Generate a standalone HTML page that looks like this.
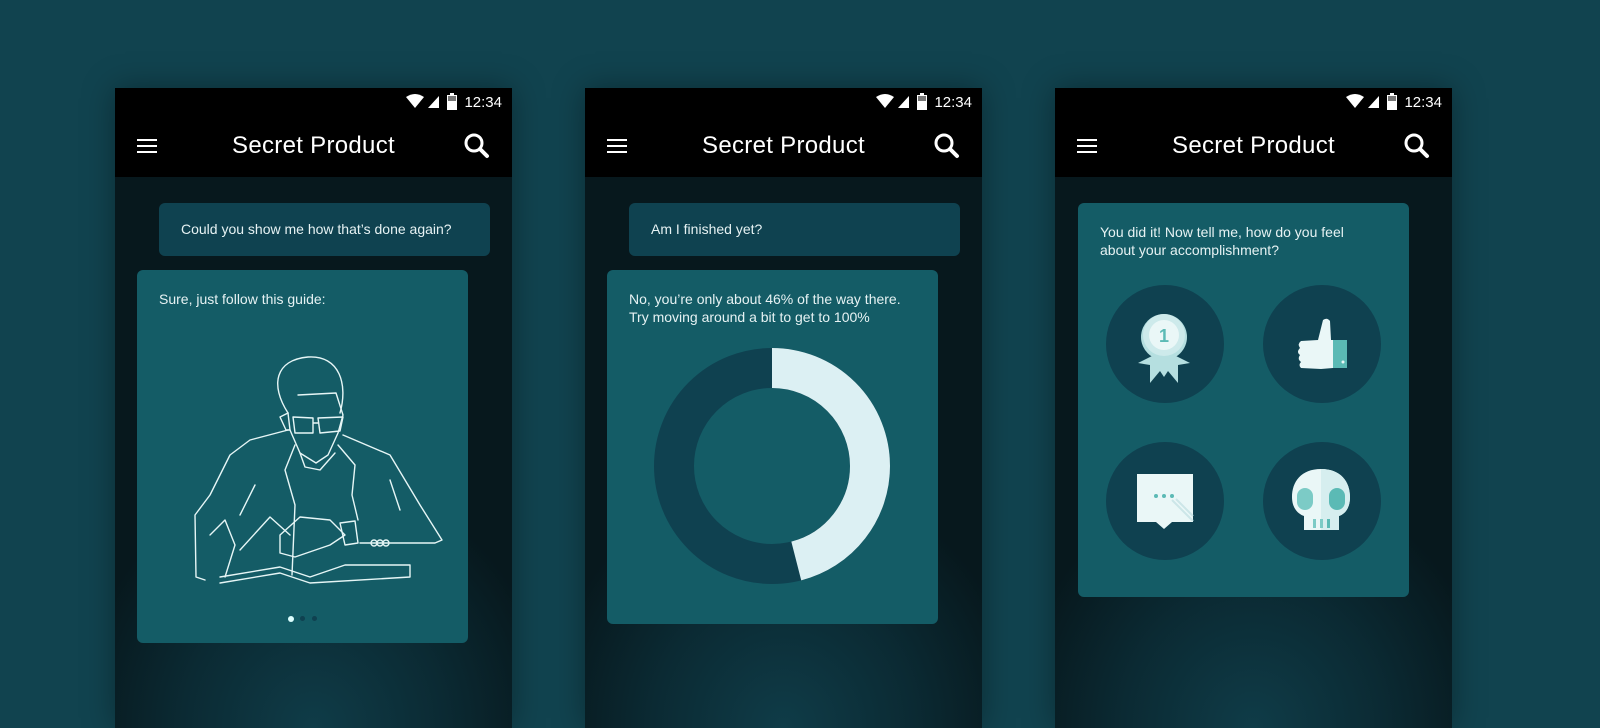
<!DOCTYPE html>
<html><head><meta charset="utf-8"><style>
*{margin:0;padding:0;box-sizing:border-box}
body{width:1600px;height:720px;overflow:hidden;background:#11434f;font-family:"Liberation Sans",sans-serif;position:relative}
.phone{position:absolute;top:88px;width:397px;height:640px;background:radial-gradient(ellipse 60% 40% at 50% 100%,#0f3c48 0%,#0b2a33 55%,#07181d 100%);box-shadow:0 0 30px rgba(0,0,0,.35)}
.status{height:28px;background:#000;color:#fff;font-size:15px;position:relative}
.status .t{position:absolute;right:10px;top:6px}
.bar{height:61px;background:#000;position:relative;color:#fff}
.bar .title{position:absolute;left:0;right:0;text-align:center;top:16px;font-size:24px;font-weight:300;letter-spacing:.3px}
.ham{position:absolute;left:22px;top:23px;width:20px;height:14px;border-top:2px solid #fff;border-bottom:2px solid #fff}
.ham:after{content:"";position:absolute;left:0;right:0;top:4px;border-top:2px solid #fff}
.bubble{position:absolute;background:#0f4250;border-radius:6px;color:#e6f2f3;font-size:14px;padding:20px 22px}
.card{position:absolute;background:#145c66;border-radius:6px;color:#e6f2f3;font-size:14px;padding:20px 22px;line-height:18px}
.circ{position:absolute;width:118px;height:118px;border-radius:50%;background:#0f4150}
</style></head><body>

<div class="phone" style="left:115px">
 <div class="status"><svg style="position:absolute;right:66px;top:6px" width="40" height="16"><path d="M0 3 Q9 -3 18 3 L9 14Z" fill="#fff"/><path d="M22 14 L33 2 L33 14Z" fill="#fff"/></svg><svg style="position:absolute;right:55px;top:5px" width="10" height="17"><rect x="3" y="0" width="4" height="2" fill="#fff"/><rect x="0" y="2" width="10" height="15" fill="#fff"/><rect x="1" y="3" width="8" height="5" fill="#777"/></svg><span class="t">12:34</span></div>
 <div class="bar"><div class="ham"></div><div class="title">Secret Product</div><svg style="position:absolute;right:22px;top:17px" width="26" height="26"><circle cx="10" cy="10" r="8" stroke="#fff" stroke-width="3" fill="none"/><path d="M16 16 L23 23" stroke="#fff" stroke-width="4" stroke-linecap="round"/></svg></div>
 <div class="bubble" style="left:44px;top:115px;width:331px;height:53px;padding-top:18px">Could you show me how that’s done again?</div>
 <div class="card" style="left:22px;top:182px;width:331px;height:373px">Sure, just follow this guide:
  <svg style="position:absolute;left:43px;top:75px" width="270" height="240" viewBox="0 0 270 240" fill="none" stroke="#e6f6f6" stroke-width="1.4" stroke-linejoin="round" stroke-linecap="round">
   <path d="M108 68 C90 40 95 15 128 12 C160 10 168 40 160 68"/>
   <path d="M118 50 L156 48 L163 70 L158 88 L148 110 L136 118 L120 108 L110 85 L108 68"/>
   <path d="M113 72 L133 73 L133 88 L115 88Z M138 73 L163 72 L160 86 L140 88Z M133 78 L138 78"/>
   <path d="M108 68 L100 72 L106 85 L110 85"/>
   <path d="M108 85 L70 95 L50 110 L30 150 L15 170 L16 232 L25 235"/>
   <path d="M163 90 L210 110 L240 160 L262 195 L255 198 L180 198"/>
   <path d="M115 100 L105 125 L115 160 L112 230"/>
   <path d="M158 100 L175 120 L172 150 L178 175"/>
   <path d="M120 108 L125 122 L140 125 L155 108"/>
   <path d="M75 140 L60 170 M210 135 L220 165"/>
   <path d="M30 190 L45 175 L55 200 L45 232"/>
   <path d="M100 190 L120 172 L150 175 L165 190 L150 200 L115 212 L100 208 Z"/>
   <path d="M160 178 L165 200 L178 198 L175 176Z"/>
   <circle cx="194" cy="198" r="3"/><circle cx="200" cy="198" r="3"/><circle cx="206" cy="198" r="3"/>
   <path d="M40 232 L100 222 L130 232 L165 220 L230 220 L230 232 L130 238 L100 228 L40 238"/>
   <path d="M60 205 L90 172 L110 190"/>
  </svg>
  <div style="position:absolute;left:151px;top:346px;width:6px;height:6px;border-radius:50%;background:#dff"></div>
  <div style="position:absolute;left:163px;top:346px;width:5px;height:5px;border-radius:50%;background:#0f4150"></div>
  <div style="position:absolute;left:175px;top:346px;width:5px;height:5px;border-radius:50%;background:#0f4150"></div>
 </div>
</div>

<div class="phone" style="left:585px">
 <div class="status"><svg style="position:absolute;right:66px;top:6px" width="40" height="16"><path d="M0 3 Q9 -3 18 3 L9 14Z" fill="#fff"/><path d="M22 14 L33 2 L33 14Z" fill="#fff"/></svg><svg style="position:absolute;right:55px;top:5px" width="10" height="17"><rect x="3" y="0" width="4" height="2" fill="#fff"/><rect x="0" y="2" width="10" height="15" fill="#fff"/><rect x="1" y="3" width="8" height="5" fill="#777"/></svg><span class="t">12:34</span></div>
 <div class="bar"><div class="ham"></div><div class="title">Secret Product</div><svg style="position:absolute;right:22px;top:17px" width="26" height="26"><circle cx="10" cy="10" r="8" stroke="#fff" stroke-width="3" fill="none"/><path d="M16 16 L23 23" stroke="#fff" stroke-width="4" stroke-linecap="round"/></svg></div>
 <div class="bubble" style="left:44px;top:115px;width:331px;height:53px;padding-top:18px">Am I finished yet?</div>
 <div class="card" style="left:22px;top:182px;width:331px;height:354px">No, you’re only about 46% of the way there.<br>Try moving around a bit to get to 100%
  <svg style="position:absolute;left:47px;top:78px" width="236" height="236"><g transform="rotate(-90 118 118)"><circle cx="118" cy="118" r="98" stroke="#0f4150" stroke-width="40" fill="none"/><circle cx="118" cy="118" r="98" stroke="#dcf0f3" stroke-width="40" fill="none" stroke-dasharray="283.2 1000"/></g></svg>
 </div>
</div>

<div class="phone" style="left:1055px">
 <div class="status"><svg style="position:absolute;right:66px;top:6px" width="40" height="16"><path d="M0 3 Q9 -3 18 3 L9 14Z" fill="#fff"/><path d="M22 14 L33 2 L33 14Z" fill="#fff"/></svg><svg style="position:absolute;right:55px;top:5px" width="10" height="17"><rect x="3" y="0" width="4" height="2" fill="#fff"/><rect x="0" y="2" width="10" height="15" fill="#fff"/><rect x="1" y="3" width="8" height="5" fill="#777"/></svg><span class="t">12:34</span></div>
 <div class="bar"><div class="ham"></div><div class="title">Secret Product</div><svg style="position:absolute;right:22px;top:17px" width="26" height="26"><circle cx="10" cy="10" r="8" stroke="#fff" stroke-width="3" fill="none"/><path d="M16 16 L23 23" stroke="#fff" stroke-width="4" stroke-linecap="round"/></svg></div>
 <div class="card" style="left:23px;top:115px;width:331px;height:394px">You did it! Now tell me, how do you feel<br>about your accomplishment?
  <div class="circ" style="left:28px;top:82px"><svg width="118" height="118"><path d="M32 78 L48 70 L68 70 L84 78 L72 80 L72 98 L62 86 L58 92 L54 86 L44 98 L44 80Z" fill="#b5dfe0"/><circle cx="58" cy="52" r="23" fill="#b5dfe0"/><circle cx="58" cy="50" r="21" fill="#cdeaeb"/><circle cx="58" cy="50" r="15" fill="#eaf7f7"/><text x="58" y="57" text-anchor="middle" font-size="18" font-weight="bold" fill="#5bbab5" font-family="Liberation Sans">1</text></svg></div>
  <div class="circ" style="left:185px;top:82px"><svg width="118" height="118"><path d="M60 35 Q64 32 67 36 L68 55 L82 55 L82 82 L58 84 L38 83 Q35 80 38 77 Q34 74 37 70 Q33 67 37 63 Q34 59 38 56 L55 55 Z" fill="#eaf7f7"/><rect x="70" y="55" width="14" height="28" fill="#5bbab5"/><circle cx="80" cy="77" r="1.5" fill="#eaf7f7"/></svg></div>
  <div class="circ" style="left:28px;top:239px"><svg width="118" height="118"><path d="M31 32 L87 32 L87 80 L66 80 L58 87 L50 80 L31 80Z" fill="#eaf7f7"/><path d="M66 58 L87 79 M70 57 L87 74" stroke="#cce6e8" stroke-width="2"/><circle cx="50" cy="54" r="2" fill="#5bbab5"/><circle cx="58" cy="54" r="2" fill="#5bbab5"/><circle cx="66" cy="54" r="2" fill="#5bbab5"/></svg></div>
  <div class="circ" style="left:185px;top:239px"><svg width="118" height="118"><path d="M58 27 C38 27 29 40 29 55 C29 66 35 72 41 74 L41 88 L76 88 L76 74 C82 72 87 66 87 55 C87 40 78 27 58 27Z" fill="#eaf7f7"/><path d="M58 27 C78 27 87 40 87 55 C87 66 82 72 76 74 L76 88 L58 88Z" fill="#d6eeef"/><rect x="34" y="46" width="16" height="22" rx="8" fill="#7ccbc6"/><rect x="66" y="46" width="16" height="22" rx="8" fill="#5bbab5"/><rect x="50" y="77" width="3" height="9" fill="#7ccbc6"/><rect x="57" y="77" width="3" height="9" fill="#7ccbc6"/><rect x="64" y="77" width="3" height="9" fill="#5bbab5"/></svg></div>
 </div>
</div>
</body></html>
